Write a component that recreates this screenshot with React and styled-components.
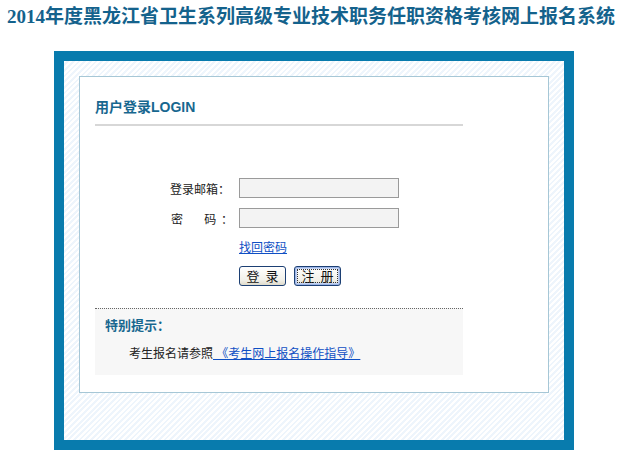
import React from 'react';
import styled, { createGlobalStyle } from 'styled-components';

const GlobalStyle = createGlobalStyle`
  body {
    margin: 0;
    background: #fff;
    font-family: "Liberation Sans", "Noto Sans CJK SC", sans-serif;
    font-size: 12px;
    color: #222;
  }
`;

const Header = styled.h1`
  margin: 0;
  padding: 6px 0 0 7px;
  height: 51px;
  box-sizing: border-box;
  font-family: "Liberation Serif", "Noto Sans CJK SC", serif;
  font-size: 19px;
  line-height: 22px;
  font-weight: bold;
  color: #14628c;
  white-space: nowrap;
`;

const Frame = styled.div`
  margin-left: 54px;
  width: 520px;
  height: 399px;
  border: 10px solid #087bad;
  padding: 15px;
  box-sizing: border-box;
  background: repeating-linear-gradient(135deg, #ffffff 0 2px, #eef5fc 2px 4px);
`;

const Panel = styled.div`
  width: 470px;
  height: 317px;
  border: 1px solid #a6c7d6;
  background: #fff;
  padding: 0 15px;
  box-sizing: border-box;
`;

const PanelTitle = styled.h2`
  margin: 0;
  padding-top: 21px;
  height: 49px;
  box-sizing: border-box;
  border-bottom: 2px solid #d7d7d7;
  width: 368px;
  font-size: 14px;
  line-height: 18px;
  font-weight: bold;
  color: #17678f;
`;

const Form = styled.div`
  display: grid;
  grid-template-columns: 64px 160px;
  column-gap: 6px;
  row-gap: 10px;
  margin: 52px 0 0 74px;
  align-items: center;
`;

const Label = styled.label`
  text-align: ${p => (p.spread ? 'justify' : 'left')};
  text-align-last: ${p => (p.spread ? 'justify' : 'auto')};
  font-size: 12px;
  color: #222;
  padding-left: ${p => (p.spread ? '2px' : '1px')};
`;

const Input = styled.input`
  width: 160px;
  height: 20px;
  box-sizing: border-box;
  border: 1px solid #9a9a9a;
  background: #f3f3f3;
  margin: 0;
  padding: 0 3px;
  font-size: 12px;
`;

const Link = styled.a`
  color: #0f4fc4;
  text-decoration: underline;
  font-size: 12px;
  cursor: pointer;
`;

const ButtonRow = styled.div`
  display: flex;
  gap: 8px;
  margin-top: 1px;
`;

const Button = styled.button`
  width: 47px;
  height: 20px;
  margin: 0;
  padding: 0;
  border: 1px solid #1c3f73;
  border-radius: 3px;
  background: linear-gradient(#ffffff, #f2f1ea 70%, #dedbcc);
  font-family: "Noto Sans CJK SC", sans-serif;
  font-size: 13px;
  line-height: 16px;
  color: #111;
  letter-spacing: 6px;
  text-indent: 6px;
  box-shadow: ${p => (p.focused ? 'inset 0 0 0 1px #9cb5e6, inset 0 0 0 2px #c4d3f3' : 'none')};
  outline: ${p => (p.focused ? '1px dotted #333' : 'none')};
  outline-offset: -4px;
`;

const Tips = styled.div`
  margin-top: 22px;
  width: 368px;
  height: 67px;
  background: #f7f7f7;
  border-top: 1px dotted #666;
  box-sizing: border-box;
  padding: 9px 0 0 10px;
`;

const TipsTitle = styled.div`
  font-size: 13px;
  font-weight: bold;
  color: #17678f;
  line-height: 16px;
`;

const TipsText = styled.div`
  margin: 12px 0 0 24px;
  line-height: 16px;
  color: #222;
`;

export default function App() {
  return (
    <>
      <GlobalStyle />
      <Header>2014年度黑龙江省卫生系列高级专业技术职务任职资格考核网上报名系统</Header>
      <Frame>
        <Panel>
          <PanelTitle>用户登录LOGIN</PanelTitle>
          <Form>
            <Label>登录邮箱：</Label>
            <Input type="text" />
            <Label spread>密　码：</Label>
            <Input type="password" />
            <span />
            <div>
              <Link>找回密码</Link>
            </div>
            <span />
            <ButtonRow>
              <Button>登录</Button>
              <Button focused>注册</Button>
            </ButtonRow>
          </Form>
          <Tips>
            <TipsTitle>特别提示：</TipsTitle>
            <TipsText>
              考生报名请参照<Link> 《考生网上报名操作指导》 </Link>
            </TipsText>
          </Tips>
        </Panel>
      </Frame>
    </>
  );
}
